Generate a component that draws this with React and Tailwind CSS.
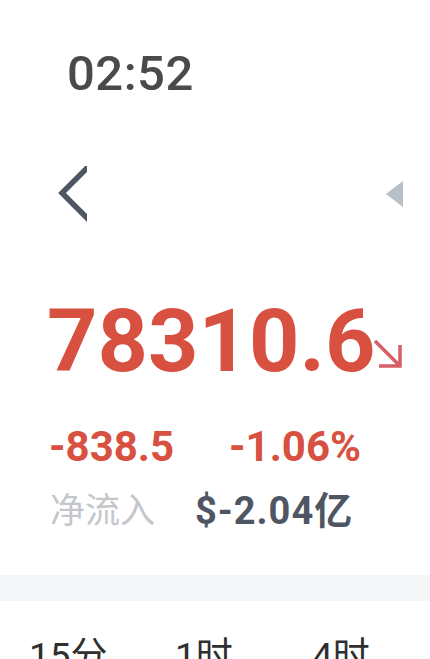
import React from "react";

export default function App() {
  const num = { fontFamily: "Roboto, 'Noto Sans CJK SC', sans-serif" };
  const cjk = { fontFamily: "Roboto, 'Noto Sans CJK SC', sans-serif" };
  return (
    <div className="w-[430px] h-[659px] overflow-hidden bg-white relative">
      {/* time */}
      <div className="pt-[49px] pl-[67px] h-[100px]">
        <div className="text-[49px] leading-none font-medium text-[#4a4a4a] tracking-[0.5px]" style={num}>02:52</div>
      </div>
      {/* nav row */}
      <div className="flex items-center justify-between h-[60px] mt-[64px] pl-[58px] pr-[27px]">
        <svg width="29" height="56" viewBox="0 0 29 56" className="overflow-hidden">
          <polyline points="40,-9 4,27 40,63" fill="none" stroke="#4f5663" strokeWidth="5.5" strokeLinejoin="miter" />
        </svg>
        <svg width="18" height="26" viewBox="0 0 18 26">
          <polygon points="18,0 18,26 1,13" fill="#b7bfc7" />
        </svg>
      </div>
      {/* big number */}
      <div className="flex items-end pl-[47px] mt-[73px]">
        <div className="text-[88px] leading-none font-bold text-[#d8503f]" style={num}>78310.6</div>
        <svg width="30" height="30" viewBox="0 0 30 30" className="ml-[-2px] mb-[16px]">
          <path d="M2 2 L27 27 M27 6 L27 27 L6 27" fill="none" stroke="#d95d64" strokeWidth="3.5" />
        </svg>
      </div>
      {/* changes */}
      <div className="flex pl-[49px] mt-[41px] text-[42px] leading-none font-bold text-[#d8503f]" style={num}>
        <div className="w-[180px]">-838.5</div>
        <div>-1.06%</div>
      </div>
      <div className="flex items-center pl-[50px] mt-[24px]">
        <div className="w-[145px] text-[35px] leading-none text-[#c3c7cc]" style={cjk}>净流入</div>
        <div className="text-[38px] leading-none font-bold text-[#4f5663] tracking-[1px]" style={num}>$-2.04亿</div>
      </div>
      {/* gray band */}
      <div className="absolute left-0 right-0 top-[575px] h-[26px] bg-[#f5f6f8]" />
      {/* tabs */}
      <div className="absolute left-0 top-[638px] flex text-[37px] leading-none text-[#2f2f2f]" style={cjk}>
        <div className="ml-[29px] w-[146px]">15分</div>
        <div className="w-[137px]">1时</div>
        <div>4时</div>
      </div>
    </div>
  );
}
